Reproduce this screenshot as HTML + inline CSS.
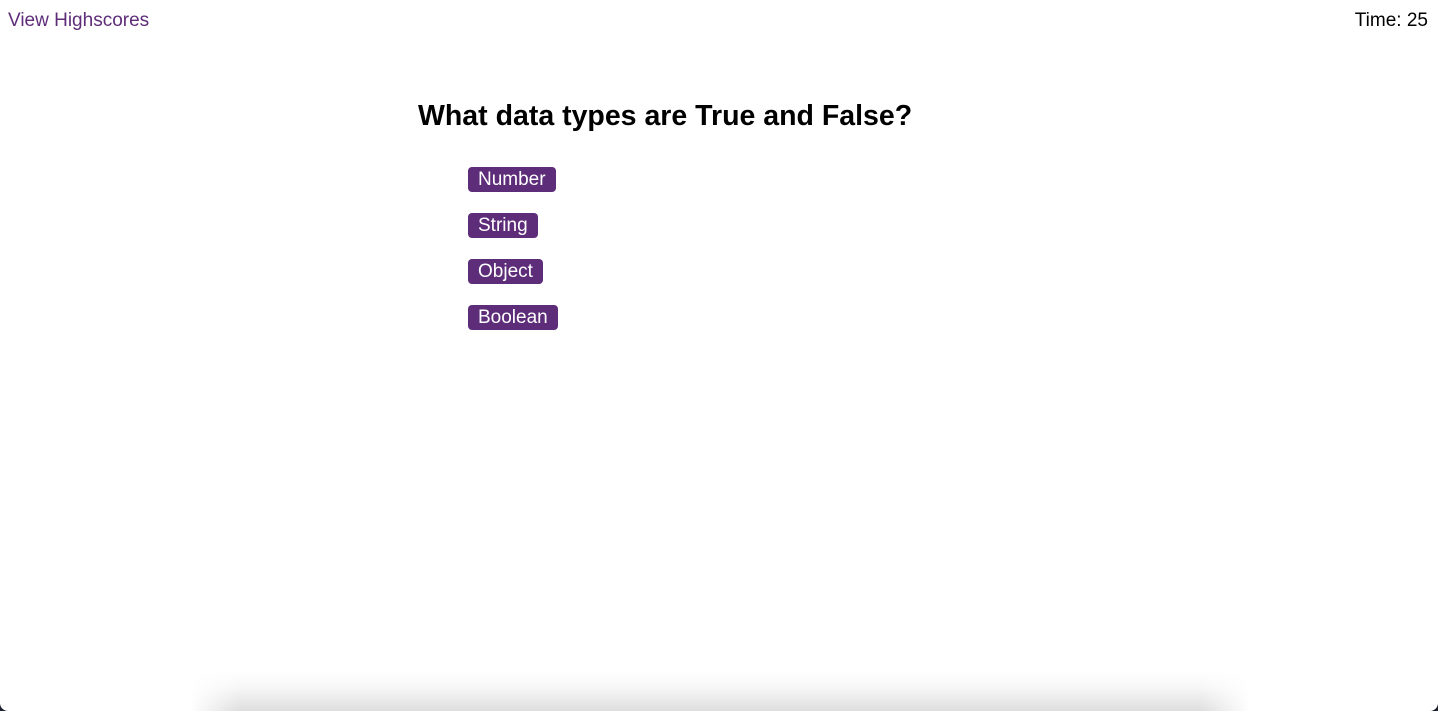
<!DOCTYPE html>
<html><head><style>
html,body{margin:0;padding:0;width:1438px;height:711px;overflow:hidden;background:#fff;font-family:"Liberation Sans",Arial,sans-serif}
#w{position:absolute;left:0;top:0;width:1438px;height:711px;overflow:hidden}
.hs{position:absolute;left:8px;top:10px;font-size:19px;color:#5e2d79}
.time{position:absolute;right:10px;top:10px;font-size:19px;color:#000}
h1{position:absolute;left:418px;top:99px;margin:0;font-size:28.5px;font-weight:bold;line-height:34px;white-space:nowrap}
.btn{position:absolute;left:468px;height:25px;background:#5e2d79;color:#fff;font-size:19px;line-height:26px;padding:0 10px;border-radius:4px;box-sizing:border-box;white-space:nowrap}
.shadow{position:absolute;left:190px;width:1060px;top:671px;height:40px;background:linear-gradient(to bottom,rgba(0,0,0,0),rgba(0,0,0,0.03) 40%,rgba(0,0,0,0.13));-webkit-mask-image:linear-gradient(to right,transparent,#000 50px,#000 1010px,transparent);mask-image:linear-gradient(to right,transparent,#000 50px,#000 1010px,transparent)}
.c{position:absolute;bottom:0;width:8px;height:8px;background:#1c2030}
.c i{position:absolute;width:16px;height:16px;border-radius:8px;background:#fff}
</style></head><body><div id="w">
<div class="hs">View Highscores</div>
<div class="time">Time: 25</div>
<h1>What data types are True and False?</h1>
<div class="btn" style="top:167px">Number</div>
<div class="btn" style="top:213px">String</div>
<div class="btn" style="top:259px">Object</div>
<div class="btn" style="top:305px">Boolean</div>
<div class="shadow"></div>
<div class="c" style="left:0"><i style="left:0;top:-8px"></i></div>
<div class="c" style="right:0"><i style="right:0;top:-8px"></i></div>
</div></body></html>
